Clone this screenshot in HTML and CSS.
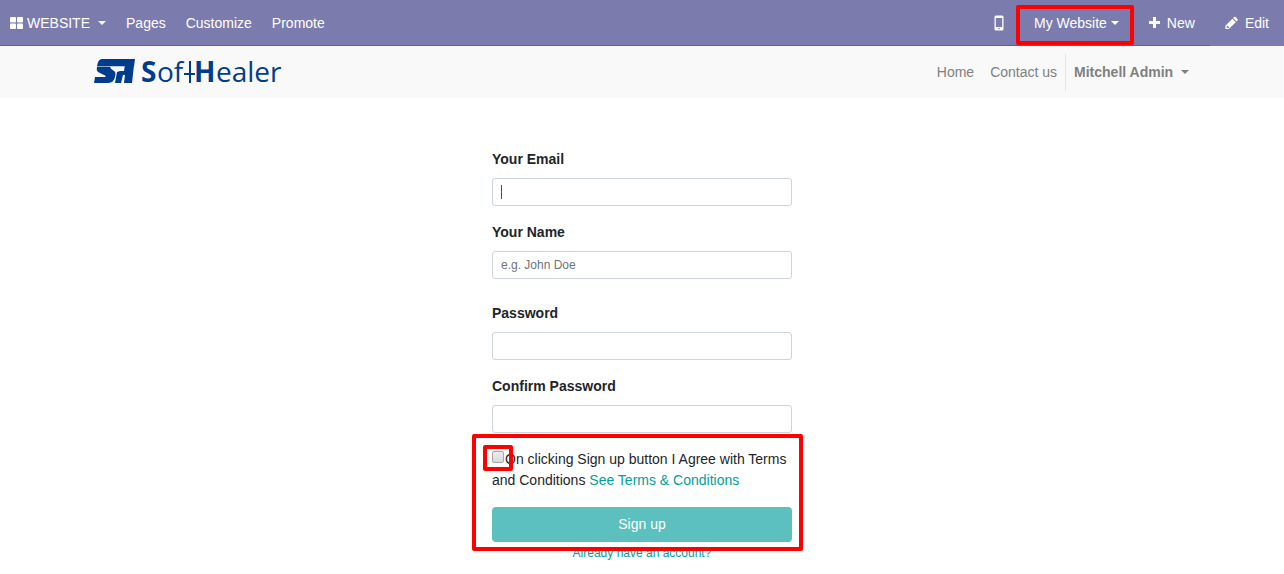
FILE: index.html
```html
<!DOCTYPE html>
<html lang="en">
<head>
    <meta charset="UTF-8">
    <meta name="viewport" content="width=device-width, initial-scale=1.0">
    <title>Sign up | My Website</title>
    <link rel="stylesheet" href="styles.css">
</head>
<body>
    <nav class="topbar">
        <div class="topbar-left">
            <a class="brand" href="#">
                <svg width="13" height="12" viewBox="0 0 13 12" fill="currentColor"><rect width="6" height="5.500" rx="1"/><rect x="7" width="6" height="5.500" rx="1"/><rect y="6.500" width="6" height="5.500" rx="1"/><rect x="7" y="6.500" width="6" height="5.500" rx="1"/></svg>
                WEBSITE
                <span class="caret"></span>
            </a>
            <a href="#">Pages</a>
            <a href="#">Customize</a>
            <a href="#">Promote</a>
        </div>
        <div class="topbar-right">
            <a href="#" aria-label="Mobile preview">
                <svg width="10" height="16" viewBox="0 0 10 16"><path fill="currentColor" fill-rule="evenodd" d="M2 .5h6A1.500 1.500 0 0 1 9.500 2v12A1.500 1.500 0 0 1 8 15.500H2A1.500 1.500 0 0 1 .5 14V2A1.500 1.500 0 0 1 2 .5zM1.800 3v9h6.400V3zM5 12.800a.8.8 0 1 0 0 1.600.8.8 0 0 0 0-1.600z"/></svg>
            </a>
            <a class="website-switch" href="#">My Website<span class="caret"></span><span class="mark mark-website"></span></a>
            <a href="#">
                <svg width="12" height="12" viewBox="0 0 12 12"><path fill="currentColor" d="M4 0h3v4h4v3H7v4H4V7H0V4h4z"/></svg>
                New
            </a>
            <a class="edit" href="#">
                <svg width="14" height="14" viewBox="0 0 14 14"><path fill="currentColor" fill-rule="evenodd" d="M7.400 2.800l3.400 3.400L3.800 13H.4V9.700zM1.600 10.400v1h.9v.9h1l.8-.8-1.900-1.900zM8.100 2.100l1-1a1 1 0 0 1 1.400 0l2 2a1 1 0 0 1 0 1.400l-1 1z"/></svg>
                Edit
            </a>
        </div>
    </nav>

    <header class="header">
        <div class="container">
            <a class="logo" href="#" aria-label="SoftHealer">
                <svg width="190" height="46" viewBox="0 -8 190 46" fill="#003c8c">
                    <path d="M8 2h33l-1 7.300H3q1-7.300 5-7.300z"/>
                    <path d="M3 9.800h13l1 2 4 3q1 2 0 5-1 6.200-7 6.200H0l1-6h10l1-1-8-4q-2-2-1-5.200z"/>
                    <path d="M31 8h9l-2 18h-8l1-8h-2l-2 8h-6l2-11 3-1h4z"/>
                    <text class="logo-bold" x="47" y="25">S</text>
                    <text x="63" y="25">of</text>
                    <path d="M95 4h2v22h-2zM90 16h11v2H90z"/>
                    <text class="logo-bold" x="100" y="25">H</text>
                    <text x="122" y="25">ealer</text>
                </svg>
            </a>
            <div class="menu">
                <a href="#">Home</a>
                <a href="#">Contact us</a>
                <a class="user" href="#">Mitchell Admin <span class="caret"></span></a>
            </div>
        </div>
    </header>

    <main>
        <form class="signup">
            <div class="field">
                <label for="login">Your Email</label>
                <input class="active" type="text" id="login" name="login">
            </div>
            <div class="field field-name">
                <label for="name">Your Name</label>
                <input type="text" id="name" name="name" placeholder="e.g. John Doe">
            </div>
            <div class="field">
                <label for="password">Password</label>
                <input type="password" id="password" name="password">
            </div>
            <div class="field">
                <label for="confirm">Confirm Password</label>
                <input type="password" id="confirm" name="confirm_password">
            </div>
            <div class="agree">
                <div class="terms">
                    <input type="checkbox" id="terms"><label for="terms">On clicking Sign up button I Agree with Terms and Conditions</label>
                    <a href="#">See Terms &amp; Conditions</a>
                    <span class="mark mark-check"></span>
                </div>
                <button type="submit">Sign up</button>
                <a class="login-link" href="#">Already have an account?</a>
                <span class="mark mark-agree"></span>
            </div>
        </form>
    </main>
</body>
</html>
```
FILE: styles.css
```css
* {
    box-sizing: border-box;
}
body {
    margin: 0;
    font-family: "Liberation Sans", Arial, sans-serif;
    font-size: 14px;
    line-height: 21px;
    color: #212529;
    background: #fff;
}
a {
    color: #00a09d;
    text-decoration: none;
}
.caret {
    display: inline-block;
    border: 4px solid transparent;
    border-top-color: currentColor;
    border-bottom: 0;
    vertical-align: 3px;
}

/* editor bar */
.topbar {
    display: flex;
    justify-content: space-between;
    height: 46px;
    background: #7c7bad;
}
.topbar-left,
.topbar-right {
    display: flex;
}
.topbar-left {
    flex: 1;
}
.topbar a {
    display: flex;
    align-items: center;
    padding: 1px 10px 0;
    border-bottom: 1px solid #5f5e97;
    color: #fff;
}
.topbar-left a:last-child {
    flex: 1;
}
.topbar .brand {
    gap: 4px;
}
.topbar .caret {
    margin-left: 4px;
}
.topbar-right a {
    gap: 6px;
    padding: 1px 15px 0;
}
.topbar-right .website-switch {
    position: relative;
    gap: 0;
}
.topbar-right .edit {
    border-bottom-color: #7c7bad;
}

/* site header */
.header {
    background: #f9f9f9;
}
.container {
    display: flex;
    justify-content: space-between;
    align-items: center;
    max-width: 1140px;
    height: 52px;
    margin: 0 auto;
    padding: 0 15px;
}
.logo {
    display: flex;
    padding-left: 7px;
}
.logo text {
    font-family: "Open Sans", "Noto Sans", sans-serif;
    font-size: 28px;
}
.logo .logo-bold {
    font-weight: bold;
}
.menu {
    display: flex;
}
.menu a {
    padding: 8px;
    color: #808080;
}
.menu .user {
    border-left: 1px solid #e6e6e6;
    font-weight: bold;
}
.user .caret {
    margin-left: 4px;
}

/* sign up form */
.signup {
    max-width: 300px;
    margin: 51px auto 0;
}
.field {
    margin-bottom: 16px;
}
.field-name {
    margin-bottom: 24px;
}
.field label {
    display: block;
    margin-bottom: 8px;
    font-weight: bold;
}
.field input {
    display: block;
    width: 100%;
    height: 28px;
    padding: 4px 8px;
    border: 1px solid #ced4da;
    border-radius: 3px;
    outline: none;
    font-family: inherit;
    font-size: 12px;
    color: #495057;
    background-color: #fff;
}
.field input::placeholder {
    color: #6c757d;
}
.field .active {
    background: linear-gradient(#495057, #495057) 8px 6px / 1px 14px no-repeat #fff;
}
.agree,
.terms {
    position: relative;
}
.terms input {
    appearance: none;
    width: 12px;
    height: 12px;
    margin: 0 1px 0 0;
    border: 1px solid #a6a6a6;
    border-radius: 2px;
    background: linear-gradient(#ececec, #d9d9d9);
    vertical-align: 1px;
}
.agree button {
    display: block;
    width: 100%;
    height: 35px;
    margin-top: 16px;
    padding: 0 0 2px;
    border: 0;
    border-radius: 4px;
    font-family: inherit;
    font-size: 14px;
    color: #fff;
    background: #5bc0be;
}
.login-link {
    display: block;
    margin-top: 2px;
    font-size: 12px;
    line-height: 18px;
    text-align: center;
}

/* red highlight frames */
.mark {
    position: absolute;
    border: 4px solid #f00;
    border-radius: 2px;
    pointer-events: none;
}
.mark-website {
    inset: 5px 0 0 -3px;
}
.mark-check {
    top: -4px;
    left: -9px;
    width: 30px;
    height: 26px;
}
.mark-agree {
    inset: -15px -11px 11px -20px;
}
```
